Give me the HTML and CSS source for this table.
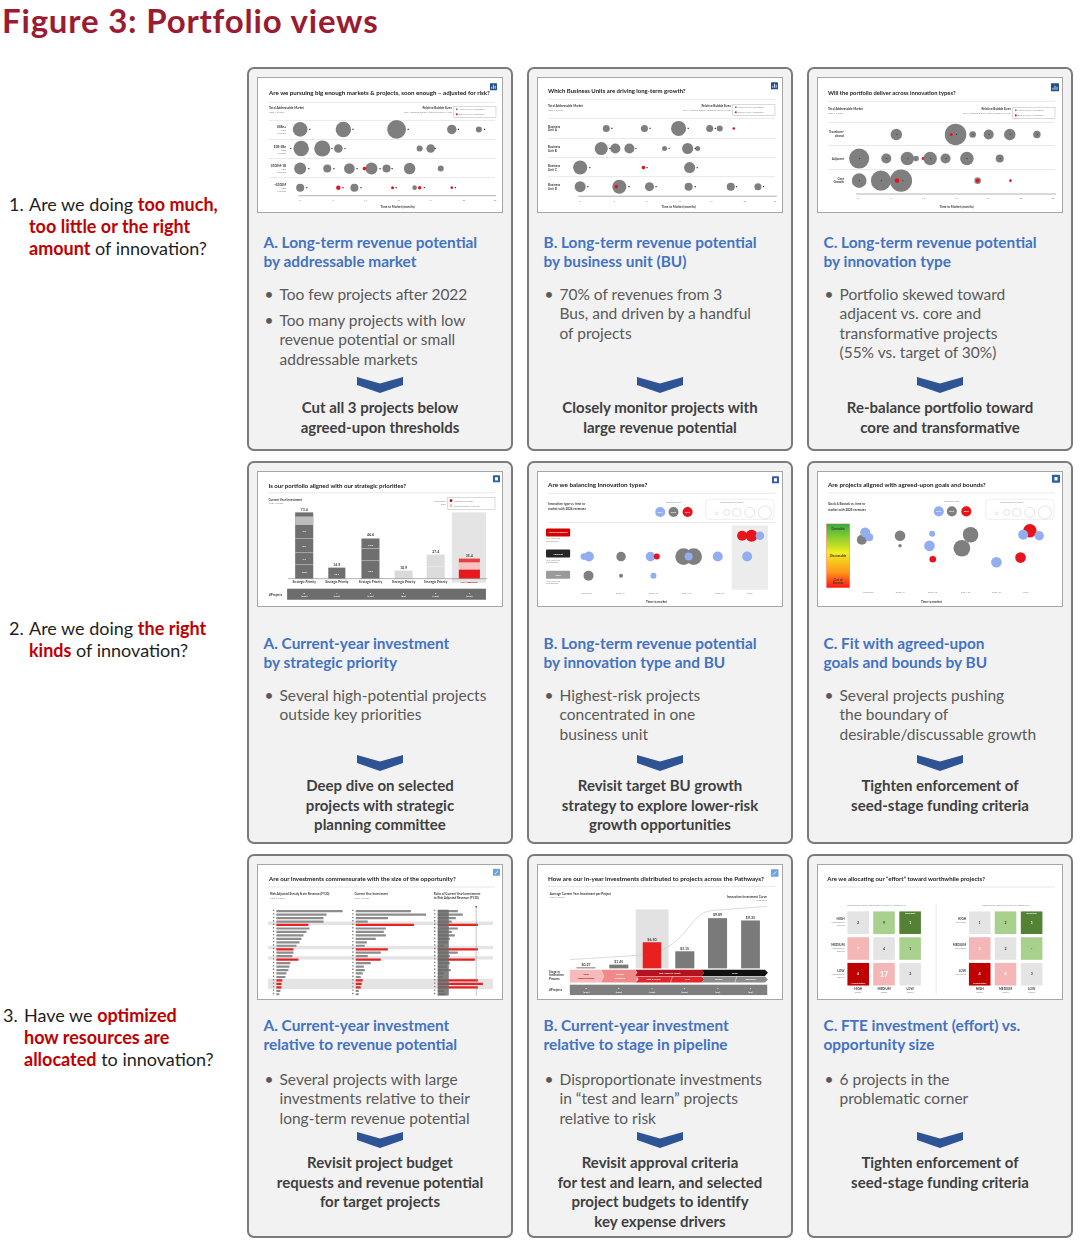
FILE: index.html
```html
<!DOCTYPE html>
<html lang="en">
<head>
<meta charset="utf-8">
<title>Figure 3: Portfolio views</title>
<link rel="stylesheet" href="styles.css">
</head>
<body>
<div class="page">
<h1 class="fig-title">Figure 3: Portfolio views</h1>
<div class="board">

<div class="question q1"><span class="qnum">1.</span><p class="qtext">Are we doing <b>too much,</b><br><b>too little or the right</b><br><b>amount</b> of innovation?</p></div>

<section class="card r1">
<div class="thumb">
<svg class="chart" viewBox="0 0 243 133">
<rect class="ico i1" x="231" y="5" width="7" height="7"/>
<path d="M232.8 10.5v-2M234.5 10.5v-4M236.2 10.5v-3" class="icol"/>
<text class="tt" x="11" y="17" textLength="220" lengthAdjust="spacingAndGlyphs">Are we pursuing big enough markets &amp; projects, soon enough – adjusted for risk?</text>
<line class="sep" x1="10" y1="24" x2="236" y2="24"/>
<text class="ts" x="11" y="31">Total Addressable Market</text>
<text class="tx" x="11" y="34.5">USD, Millions</text>
<text class="ts end" x="193" y="31">Relative Bubble Sizes</text>
<text class="tx end" x="193" y="34.5">Risk-Adjusted Steady-State Revenue (FY30)</text>
<rect class="lg" x="195" y="28" width="42" height="11"/>
<circle class="g" cx="198" cy="31" r="1"/><text class="tx" x="200" y="32">Above $18M Threshold</text>
<circle class="r" cx="198" cy="36" r="1"/><text class="tx" x="200" y="37">Below $18M Threshold</text>
<path class="sep" d="M11 42H236M11 61H236M11 80H236M11 99H236"/>
<text class="ts end" x="28" y="50">$5Bn+</text><text class="tx end" x="28" y="53">USD</text><text class="tx end" x="28" y="56">Projects</text>
<text class="ts end" x="28" y="69">$1B-5Bn</text><text class="tx end" x="28" y="72">USD</text><text class="tx end" x="28" y="75">Projects</text>
<text class="ts end" x="28" y="88">$100M-1B</text><text class="tx end" x="28" y="91">USD</text><text class="tx end" x="28" y="94">Projects</text>
<text class="ts end" x="28" y="107">&lt;$100M</text><text class="tx end" x="28" y="110">USD</text><text class="tx end" x="28" y="113">Projects</text>
<circle class="g" cx="42" cy="51" r="7.3"/><circle class="g" cx="85" cy="51" r="7.7"/><circle class="g" cx="138" cy="51" r="9.3"/><circle class="g" cx="193" cy="51" r="4.7"/><circle class="g" cx="220" cy="51" r="3"/>
<circle class="g" cx="43" cy="70" r="7.7"/><circle class="g" cx="64" cy="70" r="8"/><circle class="g" cx="80" cy="70" r="4.3"/><circle class="g" cx="161" cy="70" r="3"/><circle class="g" cx="172" cy="70" r="4.3"/>
<circle class="g" cx="42" cy="90" r="6"/><circle class="g" cx="69" cy="90" r="4"/><circle class="g" cx="91" cy="90" r="5.3"/><circle class="g" cx="113" cy="90" r="6"/><circle class="r" cx="106" cy="90" r="1.8"/><circle class="g" cx="128" cy="90" r="4"/><circle class="g" cx="151" cy="90" r="5.7"/><circle class="g" cx="182" cy="90" r="3"/>
<circle class="g" cx="42" cy="109" r="4"/><circle class="r" cx="80" cy="109" r="2.2"/><circle class="g" cx="96" cy="109" r="4"/><circle class="r" cx="134" cy="109" r="1.5"/><circle class="g" cx="156" cy="109" r="2.3"/><circle class="r" cx="161" cy="109" r="1.7"/><circle class="r" cx="193" cy="109" r="1.3"/>
<path class="dots" d="M51 51h1.2M94 51h1.2M149 51h1.2M199 51h1.2M225 51h1.2M32 70h1.2M73 70h1.2M86 70h1.2M176 70h1.2M50 90h1.2M75 90h1.2M98 90h1.2M121 90h1.2M133 90h1.2M48 109h1.2M84 109h1.2M102 109h1.2M137 109h1.2M165 109h1.2M196 109h1.2"/>
<path class="axis" d="M40 117H237"/>
<text class="tx mid" x="42" y="122.5">0</text><text class="tx mid" x="75" y="122.5">6</text><text class="tx mid" x="107" y="122.5">12</text><text class="tx mid" x="140" y="122.5">18</text><text class="tx mid" x="172" y="122.5">24</text><text class="tx mid" x="205" y="122.5">30</text><text class="tx mid" x="236" y="122.5">36</text>
<text class="ts mid" x="139" y="129">Time to Market (months)</text>
</svg>
</div>
<h2 class="card-title">A. Long-term revenue potential<br>by addressable market</h2>
<ul class="points">
<li><span>Too few projects after 2022</span></li>
<li><span>Too many projects with low<br>revenue potential or small<br>addressable markets</span></li>
</ul>
<div class="outcome">
<svg class="chev" viewBox="0 0 46 17"><polygon points="0,1 23,7.5 46,1 46,9 23,17 0,9"/></svg>
<p class="action">Cut all 3 projects below<br>agreed-upon thresholds</p>
</div>
</section>

<section class="card r1">
<div class="thumb">
<svg class="chart" viewBox="0 0 243 133">
<rect class="ico i1" x="232" y="4" width="7" height="7"/>
<path d="M233.8 9.5v-2M235.5 9.5v-4M237.2 9.5v-3" class="icol"/>
<text class="tt" x="10" y="15" textLength="137" lengthAdjust="spacingAndGlyphs">Which Business Units are driving long-term growth?</text>
<line class="sep" x1="10" y1="21" x2="236" y2="21"/>
<text class="ts" x="10" y="29">Total Addressable Market</text>
<text class="tx" x="10" y="32.5">USD, Millions</text>
<text class="ts end" x="192" y="29">Relative Bubble Sizes</text>
<text class="tx end" x="192" y="32.5">Risk-Adjusted Steady-State Revenue (FY30)</text>
<rect class="lg" x="194" y="26" width="42" height="11"/>
<circle class="g" cx="197" cy="29" r="1"/><text class="tx" x="199" y="30">Above $18M Threshold</text>
<circle class="r" cx="197" cy="34" r="1"/><text class="tx" x="199" y="35">Below $18M Threshold</text>
<path class="sep" d="M10 40H236M10 60H236M10 79H236M10 98H236"/>
<text class="ts" x="10" y="49.5">Business</text><text class="ts" x="10" y="53">Unit A</text>
<text class="ts" x="10" y="69.5">Business</text><text class="ts" x="10" y="73">Unit B</text>
<text class="ts" x="10" y="88.5">Business</text><text class="ts" x="10" y="92">Unit C</text>
<text class="ts" x="10" y="107.5">Business</text><text class="ts" x="10" y="111">Unit D</text>
<circle class="g" cx="68" cy="50" r="3.5"/><circle class="g" cx="106" cy="50" r="3.5"/><circle class="g" cx="140" cy="50" r="7.5"/><circle class="g" cx="171" cy="50" r="3.5"/><circle class="g" cx="181" cy="50" r="3"/><circle class="r" cx="195" cy="50" r="1.3"/>
<circle class="g" cx="63" cy="70" r="6.5"/><circle class="g" cx="77" cy="70" r="5"/><circle class="g" cx="91" cy="70" r="5"/><circle class="g" cx="126" cy="70" r="2.5"/><circle class="g" cx="149" cy="70" r="5.5"/><circle class="g" cx="159" cy="70" r="2.5"/>
<circle class="g" cx="42" cy="89" r="7"/><circle class="r" cx="105" cy="89" r="1.8"/><circle class="g" cx="151" cy="89" r="5.5"/>
<circle class="g" cx="42" cy="108" r="5.5"/><circle class="g" cx="81" cy="108" r="7"/><circle class="r" cx="78" cy="108" r="1.8"/><circle class="g" cx="111" cy="108" r="4.5"/><circle class="g" cx="150" cy="108" r="4"/><circle class="g" cx="192" cy="108" r="4"/><circle class="g" cx="219" cy="108" r="3.5"/>
<path class="dots" d="M73 50h1.2M111 50h1.2M149 50h1.2M176 50h1.2M71 70h1.2M97 70h1.2M130 70h1.2M156 70h1.2M51 89h1.2M108 89h1.2M158 89h1.2M49 108h1.2M90 108h1.2M117 108h1.2M156 108h1.2M197 108h1.2M224 108h1.2"/>
<path class="axis" d="M40 117.5H238"/>
<text class="tx mid" x="42" y="123">0</text><text class="tx mid" x="76" y="123">6</text><text class="tx mid" x="108" y="123">12</text><text class="tx mid" x="141" y="123">18</text><text class="tx mid" x="173" y="123">24</text><text class="tx mid" x="206" y="123">30</text><text class="tx mid" x="236" y="123">36</text>
<text class="ts mid" x="140" y="129">Time to Market (months)</text>
</svg>
</div>
<h2 class="card-title">B. Long-term revenue potential<br>by business unit (BU)</h2>
<ul class="points">
<li><span>70% of revenues from 3<br>Bus, and driven by a handful<br>of projects</span></li>
</ul>
<div class="outcome">
<svg class="chev" viewBox="0 0 46 17"><polygon points="0,1 23,7.5 46,1 46,9 23,17 0,9"/></svg>
<p class="action">Closely monitor projects with<br>large revenue potential</p>
</div>
</section>

<section class="card r1">
<div class="thumb">
<svg class="chart" viewBox="0 0 243 133">
<rect class="ico i1" x="232" y="5" width="8" height="8"/>
<path d="M234 11.5v-2M236 11.5v-4M238 11.5v-3" class="icol"/>
<text class="tt" x="10" y="17" textLength="127" lengthAdjust="spacingAndGlyphs">Will the portfolio deliver across innovation types?</text>
<line class="sep" x1="10" y1="23" x2="236" y2="23"/>
<text class="ts" x="10" y="32">Total Addressable Market</text>
<text class="tx" x="10" y="35.5">USD, Millions</text>
<text class="ts end" x="192" y="32">Relative Bubble Sizes</text>
<text class="tx end" x="192" y="35.5">Risk-Adjusted Steady-State Revenue (FY30)</text>
<rect class="lg" x="194" y="29" width="42" height="11"/>
<circle class="g" cx="197" cy="32" r="1"/><text class="tx" x="199" y="33">Above $18M Threshold</text>
<circle class="r" cx="197" cy="37" r="1"/><text class="tx" x="199" y="38">Below $18M Threshold</text>
<path class="sep" d="M10 44H236M10 67H236M10 91H236"/>
<text class="ts end" x="26" y="55">Transform-</text><text class="ts end" x="26" y="58.5">ational</text>
<text class="ts end" x="26" y="81">Adjacent</text>
<text class="ts end" x="26" y="101">Core</text><text class="ts end" x="26" y="104.5">Growth</text>
<circle class="g" cx="78" cy="56" r="5.7"/><circle class="g" cx="137" cy="56" r="10.7"/><circle class="r" cx="132.7" cy="56" r="1.5"/><circle class="g" cx="154" cy="56" r="3.3"/><circle class="g" cx="170" cy="56" r="5"/><circle class="g" cx="191" cy="56" r="5.7"/><circle class="g" cx="218" cy="56" r="3.7"/>
<circle class="g" cx="41" cy="80" r="10"/><circle class="g" cx="68" cy="80" r="5"/><circle class="g" cx="89" cy="80" r="6.7"/><circle class="g" cx="97.7" cy="80" r="2.7"/><circle class="r" cx="105" cy="80" r="1.7"/><circle class="g" cx="111.7" cy="80" r="6.7"/><circle class="g" cx="127" cy="80" r="5"/><circle class="g" cx="148.3" cy="80" r="6.7"/><circle class="g" cx="181" cy="80" r="4"/>
<circle class="g" cx="41" cy="102" r="7.3"/><circle class="g" cx="62.7" cy="102" r="10"/><circle class="g" cx="82.7" cy="102" r="11"/><circle class="r" cx="78.7" cy="102" r="2.3"/><circle class="ring" cx="159" cy="102" r="3.3"/><circle class="r" cx="159" cy="102" r="2"/><circle class="r" cx="191.7" cy="102" r="1.3"/>
<path class="dots wd" d="M78 56h1M137.5 56h1M154 56h1M170 56h1M191 56h1M218 56h1M41 80h1M68 80h1M89 80h1M111.7 80h1M127 80h1M148 80h1M181 80h1M41 102h1M62.7 102h1M84 102h1"/>
<path class="axis" d="M38 115.3H237"/>
<text class="tx mid" x="40" y="120">0</text><text class="tx mid" x="73" y="120">6</text><text class="tx mid" x="105" y="120">12</text><text class="tx mid" x="138" y="120">18</text><text class="tx mid" x="170" y="120">24</text><text class="tx mid" x="202" y="120">30</text><text class="tx mid" x="234" y="120">36</text>
<text class="ts mid" x="138" y="129">Time to Market (months)</text>
</svg>
</div>
<h2 class="card-title">C. Long-term revenue potential<br>by innovation type</h2>
<ul class="points">
<li><span>Portfolio skewed toward<br>adjacent vs. core and<br>transformative projects<br>(55% vs. target of 30%)</span></li>
</ul>
<div class="outcome">
<svg class="chev" viewBox="0 0 46 17"><polygon points="0,1 23,7.5 46,1 46,9 23,17 0,9"/></svg>
<p class="action">Re-balance portfolio toward<br>core and transformative</p>
</div>
</section>

<div class="question q2"><span class="qnum">2.</span><p class="qtext">Are we doing <b>the right</b><br><b>kinds</b> of innovation?</p></div>

<section class="card r2">
<div class="thumb">
<svg class="chart" viewBox="0 0 243 133">
<rect class="ico i2" x="234" y="3" width="7" height="7"/>
<rect x="236" y="5" width="3" height="3.2" fill="#fff"/>
<text class="tt" x="10.5" y="16" textLength="137" lengthAdjust="spacingAndGlyphs">Is our portfolio aligned with our strategic priorities?</text>
<line class="sep" x1="10" y1="20.5" x2="236" y2="20.5"/>
<text class="ts" x="10.5" y="29">Current Year Investment</text>
<text class="tx" x="10.5" y="32">USD, Millions</text>
<rect class="lg" x="189" y="25" width="47" height="12"/>
<text class="tx end" x="187" y="30">Innovation</text><text class="tx end" x="187" y="33">Type</text>
<rect x="191" y="27" width="2.5" height="2.5" fill="#c00000"/><text class="tx" x="195" y="29.3">Adjacent Projects</text>
<rect x="191" y="32" width="2.5" height="2.5" fill="#f4b6b6"/><text class="tx" x="195" y="34.3">Transformative Projects</text>
<rect x="193" y="40" width="34" height="70" fill="#e4e4e4"/>
<rect x="37" y="40" width="18" height="66" fill="#6f6f6f"/>
<rect x="37" y="44" width="18" height="8" fill="#bdbdbd"/>
<path d="M37 52h18M37 66h18M37 80h18M37 92h18" stroke="#fff" stroke-width=".4"/>
<text class="tn mid" x="46" y="38.5">73.4</text>
<text class="tw mid" x="46" y="60">7.3</text><text class="tw mid" x="46" y="74">8.3</text><text class="tw mid" x="46" y="87">7.2</text><text class="tw mid" x="46" y="100">20.8</text>
<rect x="70" y="95" width="17" height="11" fill="#6f6f6f"/>
<text class="tn mid" x="78.5" y="93">14.9</text><text class="tw mid" x="78.5" y="102">13.4</text>
<rect x="103" y="66" width="18" height="40" fill="#6f6f6f"/>
<path d="M103 76h18M103 88h18" stroke="#fff" stroke-width=".4"/>
<text class="tn mid" x="112" y="64">46.6</text><text class="tw mid" x="112" y="73">13.0</text><text class="tw mid" x="112" y="99">26.9</text>
<rect x="136" y="98" width="18" height="8" fill="#dadada"/>
<text class="tn mid" x="145" y="96">10.9</text>
<rect x="168" y="82" width="18" height="24" fill="#dcdcdc"/>
<path d="M168 94h18" stroke="#fff" stroke-width=".4"/>
<text class="tn mid" x="177" y="80">27.4</text>
<rect x="200" y="86" width="21" height="4" fill="#e84040"/>
<rect x="200" y="90" width="21" height="7" fill="#f6c2c2"/>
<rect x="200" y="97" width="21" height="9" fill="#e8191e"/>
<text class="tn mid" x="210.5" y="84">35.4</text>
<path class="axis" d="M30 106H228"/>
<text class="ts mid" x="46" y="110">Strategic Priority</text><text class="ts mid" x="78.5" y="110">Strategic Priority</text><text class="ts mid" x="112" y="110">Strategic Priority</text><text class="ts mid" x="145" y="110">Strategic Priority</text><text class="ts mid" x="177" y="110">Strategic Priority</text><text class="tsr mid" x="210.5" y="110">No Alignment</text>
<text class="ts" x="11" y="123">#Projects</text>
<rect x="29" y="116" width="198" height="11" fill="#6d6d6d"/>
<text class="tw mid" x="46" y="121">8</text><text class="tw mid" x="78.5" y="121">4</text><text class="tw mid" x="112" y="121">5</text><text class="tw mid" x="145" y="121">3</text><text class="tw mid" x="177" y="121">6</text><text class="tw mid" x="210.5" y="121">4</text>
<text class="tw mid" x="46" y="124.5">(20%)</text><text class="tw mid" x="78.5" y="124.5">(10%)</text><text class="tw mid" x="112" y="124.5">(13%)</text><text class="tw mid" x="145" y="124.5">(8%)</text><text class="tw mid" x="177" y="124.5">(15%)</text><text class="tw mid" x="210.5" y="124.5">(10%)</text>
</svg>
</div>
<h2 class="card-title">A. Current-year investment<br>by strategic priority</h2>
<ul class="points">
<li><span>Several high-potential projects<br>outside key priorities</span></li>
</ul>
<div class="outcome">
<svg class="chev" viewBox="0 0 46 17"><polygon points="0,1 23,7.5 46,1 46,9 23,17 0,9"/></svg>
<p class="action">Deep dive on selected<br>projects with strategic<br>planning committee</p>
</div>
</section>

<section class="card r2">
<div class="thumb">
<svg class="chart" viewBox="0 0 243 133">
<rect class="ico i2" x="233" y="4" width="7" height="7"/>
<rect x="235" y="6" width="3" height="3.2" fill="#fff"/>
<text class="tt" x="10" y="15" textLength="99" lengthAdjust="spacingAndGlyphs">Are we balancing innovation types?</text>
<line class="sep" x1="10" y1="21" x2="236" y2="21"/>
<text class="ts" x="10" y="33">Innovation type vs. time to</text>
<text class="ts" x="10" y="37.5">market with 2026 revenues</text>
<text class="tx mid" x="135" y="31">Business Unit</text>
<circle class="bl" cx="121.7" cy="39.6" r="5"/><circle class="g" cx="135" cy="39.6" r="5"/><circle class="r" cx="149" cy="39.6" r="5"/>
<text class="tw mid" x="121.7" y="40.5">BU1</text><text class="tw mid" x="135" y="40.5">BU2</text><text class="tw mid" x="149" y="40.5">BU3</text>
<rect class="lgr" x="167" y="27" width="68" height="20" rx="4"/>
<text class="tx mid" x="193" y="31">Total Revenues (US$)</text>
<circle class="oc" cx="178" cy="41" r="1.4"/><circle class="oc" cx="188" cy="40" r="3"/><circle class="oc" cx="198" cy="40" r="4"/><circle class="oc" cx="211" cy="40" r="5"/><circle class="oc" cx="226" cy="40" r="6.5"/>
<line class="sep" x1="10" y1="50" x2="236" y2="50"/>
<rect x="193" y="53" width="36" height="64" fill="#ececec"/>
<rect x="8" y="56" width="24" height="8" rx="1" fill="#d40000"/><text class="tw mid" x="20" y="61">Transformational</text>
<text class="tx" x="8" y="67">Yes, with risk</text><text class="tx" x="8" y="69.6">acceptance</text>
<rect x="8" y="77" width="24" height="8" rx="1" fill="#262626"/><text class="tw mid" x="20" y="82">Adjacent</text>
<text class="tx" x="8" y="88">Yes, with risk</text><text class="tx" x="8" y="90.6">acceptance</text>
<rect x="8" y="98" width="24" height="8" rx="1" fill="#9a9a9a"/><text class="tw mid" x="20" y="103">Core</text>
<text class="tx" x="8" y="109">Yes, with risk</text><text class="tx" x="8" y="111.6">acceptance</text>
<circle class="r" cx="203.3" cy="63.3" r="5"/><circle class="r" cx="212.7" cy="63.3" r="6"/><circle class="bl" cx="221" cy="63.3" r="4.3"/>
<circle class="bl" cx="45.7" cy="84" r="3.3"/><circle class="bl" cx="50.7" cy="84" r="5"/><circle class="g" cx="82.7" cy="84" r="4.7"/><circle class="bl" cx="112" cy="84" r="4.7"/><circle class="r" cx="118.3" cy="84" r="3"/>
<circle class="g" cx="145" cy="84" r="8.3"/><circle class="g" cx="155" cy="84" r="8.3"/><circle class="bl" cx="150" cy="84" r="4"/><circle class="bl" cx="179" cy="84" r="5"/><circle class="bl" cx="208.3" cy="84" r="5"/>
<circle class="g" cx="50.3" cy="103" r="5"/><circle class="g" cx="82.7" cy="103" r="2"/><circle class="bl" cx="115" cy="103" r="3"/>
<text class="tx mid" x="48" y="121">Launched</text><text class="tx mid" x="82" y="121">2020-21</text><text class="tx mid" x="115" y="121">2022-23</text><text class="tx mid" x="148" y="121">2024-25</text><text class="tx mid" x="181" y="121">2026-27</text><text class="tx mid" x="211" y="121">Later</text>
<text class="ts mid" x="118" y="130.5">Time to market</text>
</svg>
</div>
<h2 class="card-title">B. Long-term revenue potential<br>by innovation type and BU</h2>
<ul class="points">
<li><span>Highest-risk projects<br>concentrated in one<br>business unit</span></li>
</ul>
<div class="outcome">
<svg class="chev" viewBox="0 0 46 17"><polygon points="0,1 23,7.5 46,1 46,9 23,17 0,9"/></svg>
<p class="action">Revisit target BU growth<br>strategy to explore lower-risk<br>growth opportunities</p>
</div>
</section>

<section class="card r2">
<div class="thumb">
<svg class="chart" viewBox="0 0 243 133">
<defs><linearGradient id="gb" x1="0" y1="0" x2="0" y2="1"><stop offset="0" stop-color="#2fae3e"/><stop offset=".45" stop-color="#f2ee1f"/><stop offset=".75" stop-color="#ff9a1a"/><stop offset="1" stop-color="#ff1414"/></linearGradient></defs>
<rect class="ico i2" x="233" y="2.5" width="8" height="8"/>
<rect x="235.5" y="4.8" width="3" height="3.4" fill="#fff"/>
<text class="tt" x="10" y="15" textLength="157" lengthAdjust="spacingAndGlyphs">Are projects aligned with agreed-upon goals and bounds?</text>
<line class="sep" x1="10" y1="20.6" x2="236" y2="20.6"/>
<text class="ts" x="10" y="33">Goals &amp; Bounds vs. time to</text>
<text class="ts" x="10" y="38.5">market with 2025 revenues</text>
<text class="tx mid" x="133" y="30">Business Unit</text>
<circle class="bl" cx="120.3" cy="39" r="5"/><circle class="g" cx="133.3" cy="39" r="5"/><circle class="r" cx="147.7" cy="39" r="5"/>
<text class="tw mid" x="120.3" y="40">BU1</text><text class="tw mid" x="133.3" y="40">BU2</text><text class="tw mid" x="147.7" y="40">BU3</text>
<rect class="lgr" x="167" y="27" width="68" height="20" rx="4"/>
<text class="tx mid" x="193" y="31">Total Revenues (US$)</text>
<circle class="oc" cx="178" cy="41" r="1.4"/><circle class="oc" cx="188" cy="40" r="3"/><circle class="oc" cx="198" cy="40" r="4"/><circle class="oc" cx="211" cy="40" r="5"/><circle class="oc" cx="226" cy="40" r="6.5"/>
<rect x="8.5" y="51.5" width="23" height="63.5" fill="url(#gb)" stroke="#ff5a5a" stroke-width=".4"/>
<text class="ts mid" x="20" y="58">Desirable</text><text class="ts mid" x="20" y="84">Discussable</text><text class="ts mid" x="20" y="108">Out of</text><text class="ts mid" x="20" y="111.5">Bounds</text>
<circle class="g" cx="43.7" cy="67.3" r="5"/><circle class="bl" cx="47" cy="60" r="5"/><circle class="bl" cx="51" cy="64.7" r="4"/>
<circle class="g" cx="81.7" cy="63.3" r="5.3"/><circle class="g" cx="81.7" cy="73.3" r="1.7"/>
<circle class="bl" cx="113.7" cy="61.3" r="3"/><circle class="bl" cx="111" cy="73.3" r="5.3"/><circle class="r" cx="114.3" cy="86.7" r="3.3"/>
<circle class="g" cx="143.3" cy="75.7" r="8.3"/><circle class="bl" cx="148.7" cy="60" r="4"/><circle class="g" cx="152" cy="62.3" r="7.7"/>
<circle class="bl" cx="177.7" cy="89.7" r="5.3"/><circle class="r" cx="201.7" cy="85" r="5.3"/>
<circle class="r" cx="211" cy="58.3" r="6.7"/><circle class="bl" cx="204.3" cy="62.3" r="5"/><circle class="bl" cx="220.3" cy="63.3" r="4.7"/>
<text class="tx mid" x="50" y="120.6">Launched</text><text class="tx mid" x="82" y="120.6">2020-21</text><text class="tx mid" x="114" y="120.6">2022-23</text><text class="tx mid" x="147" y="120.6">2024-25</text><text class="tx mid" x="178" y="120.6">2026-27</text><text class="tx mid" x="207" y="120.6">Later</text>
<text class="ts mid" x="113" y="130">Time to market</text>
</svg>
</div>
<h2 class="card-title">C. Fit with agreed-upon<br>goals and bounds by BU</h2>
<ul class="points">
<li><span>Several projects pushing<br>the boundary of<br>desirable/discussable growth</span></li>
</ul>
<div class="outcome">
<svg class="chev" viewBox="0 0 46 17"><polygon points="0,1 23,7.5 46,1 46,9 23,17 0,9"/></svg>
<p class="action">Tighten enforcement of<br>seed-stage funding criteria</p>
</div>
</section>

<div class="question q3"><span class="qnum">3.</span><p class="qtext">Have we <b>optimized</b><br><b>how resources are</b><br><b>allocated</b> to innovation?</p></div>

<section class="card r3">
<div class="thumb">
<svg class="chart" viewBox="0 0 243 133">
<rect class="ico i3" x="234" y="3.5" width="7" height="7"/>
<path d="M235.8 9l3.2-3.2" class="icol"/>
<text class="tt" x="11" y="16" textLength="186" lengthAdjust="spacingAndGlyphs">Are our investments commensurate with the size of the opportunity?</text>
<line class="sep" x1="10" y1="21.7" x2="236" y2="21.7"/>
<text class="ts" x="12" y="30">Risk Adjusted Steady State Revenue (FY30)</text><text class="tx" x="12" y="33.5">USD, Millions</text>
<text class="ts" x="96" y="30">Current Year Investment</text><text class="tx" x="96" y="33.5">USD, Millions</text>
<text class="ts" x="175" y="30">Ratio of Current Year Investments</text><text class="ts" x="175" y="34">to Risk Adjusted Revenue (FY30)</text>
<path d="M10 57.8h224M10 82h224M10 92.3h224" stroke="#e4e4e4" stroke-width="3.3"/>
<rect x="10" y="113" width="224" height="10.3" fill="#e4e4e4"/>
<path class="idx" d="M15.5 44.3V130M94.5 44.3V130M176 44.3V130"/>
<path class="bar-g" d="M18.3 45.7h66M18.3 49.2h50M18.3 52.6h47M18.3 56.1h47M18.3 63h33M18.3 66.4h30M18.3 69.9h27M18.3 73.3h25M18.3 76.8h23M18.3 80.2h20M18.3 87.1h17M18.3 90.6h16M18.3 97.5h14M18.3 100.9h13M18.3 104.4h12M18.3 107.8h10M18.3 111.3h9M18.3 125.1h4M18.3 128.5h3"/>
<path class="bar-r" d="M18.3 59.5h32M18.3 83.7h17M18.3 94h22M18.3 114.7h6M18.3 118.2h5M18.3 121.6h5"/>
<path class="bar-g" d="M97.3 45.7h55M97.3 49.2h70M97.3 52.6h32M97.3 56.1h12M97.3 63h30M97.3 66.4h28M97.3 69.9h30M97.3 73.3h20M97.3 76.8h11M97.3 80.2h9M97.3 87.1h25M97.3 90.6h12M97.3 97.5h15M97.3 100.9h8M97.3 104.4h9M97.3 107.8h7M97.3 111.3h5M97.3 125.1h3M97.3 128.5h3"/>
<path class="bar-r" d="M97.3 59.5h58M97.3 83.7h32M97.3 94h25M97.3 114.7h7M97.3 118.2h6M97.3 121.6h5"/>
<path class="bar-g" d="M179 45.7h20M179 49.2h25M179 52.6h18M179 56.1h14M179 63h20M179 66.4h14M179 69.9h17M179 73.3h12M179 76.8h10M179 80.2h6M179 87.1h20M179 90.6h12M179 97.5h12M179 100.9h9M179 104.4h13M179 107.8h6M179 111.3h5M179 125.1h6M179 128.5h8"/>
<path class="bar-r" d="M179 59.5h40M179 83.7h40M179 94h37M179 114.7h40M179 118.2h45M179 121.6h40"/>
<rect x="179" y="44.3" width="11" height="85.5" fill="#6b6b6b" opacity=".85"/>
<path d="M217.3 42V130" stroke="#8a8a8a" stroke-width=".5"/>
<path d="M216.2 40.5h2.2l-1.1 2z" fill="#555"/>
</svg>
</div>
<h2 class="card-title">A. Current-year investment<br>relative to revenue potential</h2>
<ul class="points">
<li><span>Several projects with large<br>investments relative to their<br>long-term revenue potential</span></li>
</ul>
<div class="outcome">
<svg class="chev" viewBox="0 0 46 17"><polygon points="0,1 23,7.5 46,1 46,9 23,17 0,9"/></svg>
<p class="action">Revisit project budget<br>requests and revenue potential<br>for target projects</p>
</div>
</section>

<section class="card r3">
<div class="thumb">
<svg class="chart" viewBox="0 0 243 133">
<rect class="ico i3" x="232" y="4" width="7.5" height="7.5"/>
<path d="M233.9 9.6l3.4-3.4" class="icol"/>
<text class="tt" x="10" y="16" textLength="215" lengthAdjust="spacingAndGlyphs">How are our in-year investments distributed to projects across the Pathways?</text>
<line class="sep" x1="10" y1="21.3" x2="236" y2="21.3"/>
<text class="ts" x="11.7" y="29.3">Average Current Year Investment per Project</text><text class="tx" x="11.7" y="33">USD, Millions</text>
<text class="ts end" x="228" y="32.3">Innovation Investment Curve</text><text class="tx end" x="228" y="36">Illustrative</text>
<rect x="97.3" y="44" width="32.7" height="58.7" fill="#e2e2e2"/>
<path d="M32 94L95 90C120 88 130 84 145 68C158 52 162 46 175 45L228 41" fill="none" stroke="#d2d2d2" stroke-width=".8"/>
<rect x="38.3" y="101.7" width="19" height="1" fill="#7a7a7a"/>
<rect x="71" y="99" width="19" height="3.7" fill="#7a7a7a"/>
<rect x="104.3" y="76.7" width="18.4" height="26" fill="#e8201f"/>
<rect x="136.7" y="85.7" width="19" height="17" fill="#7a7a7a"/>
<rect x="169.3" y="52.7" width="19" height="50" fill="#7a7a7a"/>
<rect x="202.3" y="55" width="18.7" height="47.7" fill="#7a7a7a"/>
<text class="tn mid" x="47.8" y="100">$0.27</text><text class="tn mid" x="80.5" y="97.5">$1.45</text><text class="tn mid" x="113.5" y="75">$6.50</text><text class="tn mid" x="146" y="84">$3.15</text><text class="tn mid" x="178.8" y="51">$9.89</text><text class="tn mid" x="211.6" y="53.5">$9.35</text>
<text class="ts" x="11" y="107">Stage in</text><text class="ts" x="11" y="110.5">Innovation</text><text class="ts" x="11" y="114">Process</text>
<polygon points="31.7,104 63,104 66,110.3 63,116.7 31.7,116.7" fill="#f6bcbc"/>
<text class="tsr mid" x="48" y="109.5">Seek</text><text class="tsr mid" x="48" y="113">Opportunities</text>
<polygon points="63,104 97,104 100,110.3 97,116.7 63,116.7 66,110.3" fill="#f08a8a"/>
<text class="tw mid" x="81.5" y="109.5">Design</text><text class="tw mid" x="81.5" y="113">Solutions</text>
<polygon points="97,104 163,104 165.5,107.2 163,110.3 97,110.3 99,107.2" fill="#b3121f"/>
<text class="tw mid" x="131" y="108.2">Test, Learn &amp; Adapt</text>
<polygon points="99,110.7 163,110.7 165.5,113.7 163,116.7 97,116.7 100,113.7" fill="#e0262b"/>
<path d="M132 116.7l2-6" stroke="#fff" stroke-width=".5"/>
<text class="tw mid" x="115" y="114.6">Test &amp; Learn</text><text class="tw mid" x="149" y="114.6">Pilot</text>
<polygon points="163,104 226,104 229,107.2 226,110.3 163,110.3 165.5,107.2" fill="#111"/>
<text class="tw mid" x="196" y="108.2">Scale</text>
<polygon points="163,110.7 226,110.7 229,113.7 226,116.7 163,116.7 165.5,113.7" fill="#8c8c8c"/>
<path d="M196 116.7l2-6" stroke="#fff" stroke-width=".5"/>
<text class="tw mid" x="180" y="114.6">Launch</text><text class="tw mid" x="212" y="114.6">Efficiency</text>
<text class="ts" x="11" y="125">#Projects</text>
<rect x="31.7" y="119" width="196.6" height="10.3" fill="#7f7f7f"/>
<text class="tw mid" x="48" y="123.5">8</text><text class="tw mid" x="80.5" y="123.5">6</text><text class="tw mid" x="113.5" y="123.5">4</text><text class="tw mid" x="146" y="123.5">7</text><text class="tw mid" x="179" y="123.5">2</text><text class="tw mid" x="211.6" y="123.5">2</text>
<text class="tw mid" x="48" y="127">(12%)</text><text class="tw mid" x="80.5" y="127">(20%)</text><text class="tw mid" x="113.5" y="127">(13%)</text><text class="tw mid" x="146" y="127">(30%)</text><text class="tw mid" x="179" y="127">(5%)</text><text class="tw mid" x="211.6" y="127">(6%)</text>
</svg>
</div>
<h2 class="card-title">B. Current-year investment<br>relative to stage in pipeline</h2>
<ul class="points">
<li><span>Disproportionate investments<br>in “test and learn” projects<br>relative to risk</span></li>
</ul>
<div class="outcome">
<svg class="chev" viewBox="0 0 46 17"><polygon points="0,1 23,7.5 46,1 46,9 23,17 0,9"/></svg>
<p class="action">Revisit approval criteria<br>for test and learn, and selected<br>project budgets to identify<br>key expense drivers</p>
</div>
</section>

<section class="card r3">
<div class="thumb">
<svg class="chart" viewBox="0 0 243 133">
<text class="tt" x="9.3" y="16" textLength="157" lengthAdjust="spacingAndGlyphs">Are we allocating our “effort” toward worthwhile projects?</text>
<line class="sep" x1="10" y1="21.7" x2="236" y2="21.7"/>
<text class="tx mid" x="58" y="41">Comparison: 2020 Addressable Market vs. Effort level</text>
<text class="tx mid" x="187" y="41">Comparison: 2020 Revenues vs. Effort level</text>
<line class="sep" x1="117.7" y1="38" x2="117.7" y2="128"/>
<rect x="29.3" y="46" width="21.5" height="22.5" fill="#e4e4e4"/><rect x="55" y="46" width="21.5" height="22.5" fill="#a9d18e"/><rect x="81" y="46" width="21.5" height="22.5" fill="#548235"/>
<rect x="29.3" y="71.7" width="21.5" height="22.5" fill="#f4b6b6"/><rect x="55" y="71.7" width="21.5" height="22.5" fill="#e4e4e4"/><rect x="81" y="71.7" width="21.5" height="22.5" fill="#a9d18e"/>
<rect x="29.3" y="97.3" width="21.5" height="22.5" fill="#c00000"/><rect x="55" y="97.3" width="21.5" height="22.5" fill="#f4b6b6"/><rect x="81" y="97.3" width="21.5" height="22.5" fill="#e4e4e4"/>
<text class="tn mid" x="40" y="58.5">2</text><text class="tn mid" x="65.8" y="58.5">9</text><text class="tcw mid" x="91.8" y="58.5">1</text>
<text class="tcw mid" x="40" y="84.2">7</text><text class="tn mid" x="65.8" y="84.2">4</text><text class="tn mid" x="91.8" y="84.2">1</text>
<text class="tcw mid" x="40" y="109.8">4</text><text class="tcw big mid" x="65.8" y="111">17</text><text class="tn mid" x="91.8" y="109.8">2</text>
<text class="tw mid" x="91.8" y="49">Desirable</text><text class="tw mid" x="40" y="118.5">Problematic</text>
<rect x="150.3" y="46" width="21.5" height="22.5" fill="#e4e4e4"/><rect x="176" y="46" width="21.5" height="22.5" fill="#a9d18e"/><rect x="202" y="46" width="21.5" height="22.5" fill="#548235"/>
<rect x="150.3" y="71.7" width="21.5" height="22.5" fill="#f4b6b6"/><rect x="176" y="71.7" width="21.5" height="22.5" fill="#e4e4e4"/><rect x="202" y="71.7" width="21.5" height="22.5" fill="#a9d18e"/>
<rect x="150.3" y="97.3" width="21.5" height="22.5" fill="#c00000"/><rect x="176" y="97.3" width="21.5" height="22.5" fill="#f4b6b6"/><rect x="202" y="97.3" width="21.5" height="22.5" fill="#e4e4e4"/>
<text class="tn mid" x="161" y="58.5">1</text><text class="tn mid" x="186.8" y="58.5">2</text><text class="tcw mid" x="212.8" y="58.5">1</text>
<text class="tcw mid" x="161" y="84.2">3</text><text class="tn mid" x="186.8" y="84.2">2</text><text class="tn mid" x="212.8" y="84.2">-</text>
<text class="tcw mid" x="161" y="109.8">4</text><text class="tcw mid" x="186.8" y="109.8">8</text><text class="tn mid" x="212.8" y="109.8">3</text>
<text class="tw mid" x="212.8" y="49">Desirable</text><text class="tw mid" x="161" y="118.5">Problematic</text>
<text class="ts end" x="26.5" y="55">HIGH</text><text class="tx end" x="26.5" y="58">Addressable</text><text class="tx end" x="26.5" y="60.6">market</text>
<text class="ts end" x="26.5" y="80.7">MEDIUM</text><text class="tx end" x="26.5" y="83.7">Addressable</text><text class="tx end" x="26.5" y="86.3">market</text>
<text class="ts end" x="26.5" y="106.3">LOW</text><text class="tx end" x="26.5" y="109.3">Addressable</text><text class="tx end" x="26.5" y="111.9">market</text>
<text class="ts end" x="147.5" y="55">HIGH</text><text class="tx end" x="147.5" y="58">Revenues</text>
<text class="ts end" x="147.5" y="80.7">MEDIUM</text><text class="tx end" x="147.5" y="83.7">Revenues</text>
<text class="ts end" x="147.5" y="106.3">LOW</text><text class="tx end" x="147.5" y="109.3">Revenues</text>
<text class="ts mid" x="40" y="124">HIGH</text><text class="ts mid" x="65.8" y="124">MEDIUM</text><text class="ts mid" x="91.8" y="124">LOW</text>
<text class="tx mid" x="40" y="127.3">Effort</text><text class="tx mid" x="65.8" y="127.3">Effort</text><text class="tx mid" x="91.8" y="127.3">Effort</text>
<text class="ts mid" x="161" y="124">HIGH</text><text class="ts mid" x="186.8" y="124">MEDIUM</text><text class="ts mid" x="212.8" y="124">LOW</text>
<text class="tx mid" x="161" y="127.3">Effort</text><text class="tx mid" x="186.8" y="127.3">Effort</text><text class="tx mid" x="212.8" y="127.3">Effort</text>
</svg>
</div>
<h2 class="card-title">C. FTE investment (effort) vs.<br>opportunity size</h2>
<ul class="points">
<li><span>6 projects in the<br>problematic corner</span></li>
</ul>
<div class="outcome">
<svg class="chev" viewBox="0 0 46 17"><polygon points="0,1 23,7.5 46,1 46,9 23,17 0,9"/></svg>
<p class="action">Tighten enforcement of<br>seed-stage funding criteria</p>
</div>
</section>

</div>
</div>
</body>
</html>
```

FILE: styles.css
```css
* { box-sizing: border-box; }

body {
  margin: 0;
  background: #ffffff;
  font-family: Lato, "Open Sans", "Liberation Sans", sans-serif;
  color: #222222;
}

.page {
  width: 1080px;
  height: 1244px;
  overflow: hidden;
}

.fig-title {
  margin: 0;
  padding-left: 2px;
  font-size: 33px;
  line-height: 40px;
  letter-spacing: 0.8px;
  font-weight: 700;
  color: #9b1b30;
}

.board {
  display: grid;
  grid-template-columns: 233px repeat(3, 266px);
  grid-template-rows: 384px 383px 384px;
  column-gap: 14px;
  row-gap: 10px;
  margin-top: 27px;
}

/* questions */
.question {
  display: flex;
  align-items: flex-start;
  font-size: 18px;
  line-height: 22px;
  color: #1e1e1e;
}
.q1 { padding: 126px 0 0 9px; }
.q2 { padding: 156px 0 0 9px; }
.q3 { padding: 150px 0 0 3px; }
.qnum { flex: 0 0 20px; }
.q3 .qnum { flex-basis: 21px; }
.qtext { margin: 0; }
.qtext b { color: #c00000; font-weight: 700; }

/* cards */
.card {
  background: #f2f2f2;
  border: 2px solid #7b7b7b;
  border-radius: 7px;
  padding: 8px 8px 0;
  display: flex;
  flex-direction: column;
}

.thumb {
  flex: none;
  height: 136px;
  background: #ffffff;
  border: 1.5px solid #a6a6a6;
}

.chart {
  display: block;
  width: 100%;
  height: 100%;
  filter: blur(0.25px);
}

.card-title {
  margin: 19.5px 0 0 6.5px;
  font-size: 15.4px;
  line-height: 19px;
  font-weight: 700;
  color: #4472c4;
}
.r2 .card-title { margin-top: 26.5px; }
.r3 .card-title { margin-top: 15.5px; }

.points {
  list-style: none;
  margin: 14px 0 0 6.5px;
  padding: 0;
  font-size: 15.5px;
  line-height: 19.5px;
  color: #595959;
}
.r3 .points { margin-top: 16px; }
.points li { display: flex; }
.points li + li { margin-top: 6.5px; }
.points li::before {
  content: "•";
  flex: 0 0 15px;
  padding-left: 1px;
}

.outcome {
  flex: none;
  margin-top: auto;
  height: 73px;
  display: flex;
  flex-direction: column;
  align-items: center;
}
.r2 .outcome { height: 88px; }
.r3 .outcome { height: 105px; }

.chev {
  flex: none;
  width: 46px;
  height: 17px;
  fill: #2f5496;
}

.action {
  margin: 5px 0 0;
  font-size: 15px;
  line-height: 19.5px;
  font-weight: 700;
  color: #404040;
  text-align: center;
}

/* thumbnail chart parts */
.chart text { font-family: Lato, "Liberation Sans", sans-serif; }
.tt { font-size: 5px; font-weight: 700; fill: #1a1a1a; }
.ts { font-size: 3.1px; font-weight: 700; fill: #3a3a3a; }
.tsr { font-size: 2.6px; font-weight: 700; fill: #b00000; }
.tx { font-size: 2.5px; fill: #8a8a8a; }
.tw { font-size: 2.5px; font-weight: 700; fill: #ffffff; }
.tn { font-size: 3.6px; font-weight: 700; fill: #404040; }
.tcw { font-size: 3.6px; font-weight: 700; fill: #ffffff; }
.big { font-size: 7px; }
.mid { text-anchor: middle; }
.end { text-anchor: end; }

.sep { stroke: #d9d9d9; stroke-width: 0.6; fill: none; }
.axis { stroke: #7f7f7f; stroke-width: 0.6; fill: none; }
.lg { fill: #ffffff; stroke: #b5b5b5; stroke-width: 0.5; }
.lgr { fill: #ffffff; stroke: #dcdcdc; stroke-width: 0.5; }
.oc { fill: #ffffff; stroke: #b8b8b8; stroke-width: 0.4; }
.ring { fill: #8a8a8a; }
.dots { stroke: #333333; stroke-width: 1.2; fill: none; }
.dots.wd { stroke: #2a2a2a; stroke-width: 0.9; }
.idx { stroke: #777777; stroke-width: 1.3; stroke-dasharray: 1.4 2.05; fill: none; }
.bar-g { stroke: #8c8c8c; stroke-width: 2.2; fill: none; }
.bar-r { stroke: #e8201f; stroke-width: 2.2; fill: none; }

.g { fill: #7f7f7f; }
.r { fill: #e8141b; }
.bl { fill: #93aef0; }

.ico { rx: 0.6; }
.i1 { fill: #1f4e8c; }
.i2 { fill: #2e5ea8; }
.i3 { fill: #6fa3e0; }
.icol { stroke: #ffffff; stroke-width: 0.8; fill: none; }
```
